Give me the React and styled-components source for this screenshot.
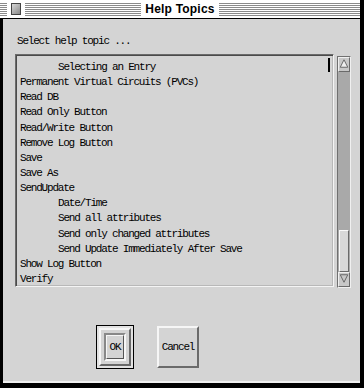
import React from 'react'
import styled, { createGlobalStyle } from 'styled-components'

const Global = createGlobalStyle`
  html, body { margin: 0; padding: 0; background: #000; }
  body { width: 364px; height: 388px; overflow: hidden; }
`

const Win = styled.div`
  width: 364px;
  height: 388px;
  box-sizing: border-box;
  display: flex;
  flex-direction: column;
  border-right: 4px solid #000;
  background: #d4d4d4;
`

const TitleBar = styled.div`
  height: 19px;
  box-sizing: border-box;
  background: #fff;
  border-bottom: 1px solid #000;
  display: grid;
  grid-template-columns: 1fr auto 1fr;
  align-items: center;
  column-gap: 4px;
`

const TitleSide = styled.div`
  display: flex;
  align-items: center;
  gap: 3px;
`

const Stripes = styled.div`
  flex: ${p => p.w ? `0 0 ${p.w}px` : '1 1 0'};
  height: 13px;
  background: repeating-linear-gradient(to bottom, #8a8a8a 0 1px, #fff 1px 2px);
`

const CloseBox = styled.div`
  width: 8px;
  height: 10px;
  flex-shrink: 0;
  margin: 0 1px;
  border: 1px solid #444;
  background: linear-gradient(135deg, #d8d8d8, #888);
`

const Title = styled.div`
  font-family: "Liberation Sans", Arial, sans-serif;
  font-weight: bold;
  font-size: 12px;
  letter-spacing: 0.2px;
  color: #000;
`

const Body = styled.div`
  flex: 1;
  display: flex;
  flex-direction: column;
  border-left: 3px solid #000;
  border-bottom: 5px solid #000;
  box-shadow: inset 0 -2px 0 #f0f0f0;
  padding: 15px 0 0 12px;
  font-family: "Liberation Mono", "DejaVu Sans Mono", monospace;
  font-size: 11px;
  letter-spacing: -1.2px;
  color: #000;
`

const Label = styled.div`
  height: 15px;
  line-height: 15px;
  padding-left: 2px;
  margin-bottom: 5px;
`

const ListRow = styled.div`
  display: flex;
  align-items: flex-start;
  gap: 3px;
`

const ListBox = styled.div`
  position: relative;
  width: 319px;
  height: 233px;
  box-sizing: border-box;
  border: 1px solid;
  border-color: #6a6a6a #f4f4f4 #f4f4f4 #6a6a6a;
  box-shadow: inset 1px 1px 0 #4a4a4a, inset -1px -1px 0 #b8b8b8;
  padding: 5px 0 0 4px;
`

const Item = styled.div`
  height: 15.15px;
  line-height: 15.15px;
  padding-left: ${p => p.indent ? 38 : 0}px;
  white-space: nowrap;
`

const Caret = styled.div`
  position: absolute;
  top: 3px;
  right: 3px;
  width: 2px;
  height: 14px;
  background: #000;
`

const ScrollBar = styled.div`
  margin-top: 2px;
  width: 14px;
  height: 232px;
  box-sizing: border-box;
  border: 1px solid;
  border-color: #707070 #f0f0f0 #f0f0f0 #707070;
  background: #a9a9a9;
  display: flex;
  flex-direction: column;
`

const Arrow = styled.div`
  height: 13px;
  display: flex;
  background: #c8c8c8;
  border: 1px solid;
  border-color: #f0f0f0 #6a6a6a #6a6a6a #f0f0f0;
`

const Track = styled.div`
  flex: 1;
  display: flex;
  flex-direction: column;
  justify-content: flex-end;
`

const Thumb = styled.div`
  height: 42px;
  margin: 0 1px;
  box-sizing: border-box;
  border: 1px solid;
  border-color: #fafafa #6a6a6a #6a6a6a #fafafa;
  background: #d8d8d8;
`

const ButtonRow = styled.div`
  display: flex;
  align-items: center;
  gap: 23px;
  padding: 37px 0 0 81px;
`

const DefaultRing = styled.div`
  width: 38px;
  height: 44px;
  box-sizing: border-box;
  border: 1px solid #000;
  padding: 2px;
  display: flex;
  background: #e2e2e2;
`

const Button = styled.div`
  ${p => p.fill ? 'flex: 1;' : 'width: 42px; height: 42px;'}
  box-sizing: border-box;
  border: 2px solid;
  border-color: #f6f6f6 #6a6a6a #6a6a6a #f6f6f6;
  background: #d4d4d4;
  display: flex;
  align-items: center;
  justify-content: center;
  padding: ${p => p.fill ? '3px' : '0'};
`

const Face = styled.div`
  flex: 1;
  align-self: stretch;
  box-sizing: border-box;
  border: 2px solid;
  border-color: #888 #f6f6f6 #f6f6f6 #888;
  display: flex;
  align-items: center;
  justify-content: center;
`

const Inner = styled.div`
  flex: 1;
  align-self: stretch;
  box-sizing: border-box;
  border: 1px solid;
  border-color: #f6f6f6 #555 #555 #f6f6f6;
  display: flex;
  align-items: center;
  justify-content: center;
`

const items = [
  ['Selecting an Entry', true],
  ['Permanent Virtual Circuits (PVCs)'],
  ['Read DB'],
  ['Read Only Button'],
  ['Read/Write Button'],
  ['Remove Log Button'],
  ['Save'],
  ['Save As'],
  ['SendUpdate'],
  ['Date/Time', true],
  ['Send all attributes', true],
  ['Send only changed attributes', true],
  ['Send Update Immediately After Save', true],
  ['Show Log Button'],
  ['Verify']
]

function UpArrow () {
  return (
    <svg width='12' height='11' viewBox='0 0 12 11'>
      <polygon points='6,1 10.5,10 1.5,10' fill='#eee' stroke='#555' strokeWidth='1' />
    </svg>
  )
}

function DownArrow () {
  return (
    <svg width='12' height='11' viewBox='0 0 12 11'>
      <polygon points='1.5,1 10.5,1 6,10' fill='#c8c8c8' stroke='#555' strokeWidth='1' />
    </svg>
  )
}

export default function App () {
  return (
    <>
      <Global />
      <Win>
        <TitleBar>
          <TitleSide>
            <Stripes w={7} />
            <CloseBox />
            <Stripes />
          </TitleSide>
          <Title>Help Topics</Title>
          <TitleSide>
            <Stripes />
          </TitleSide>
        </TitleBar>
        <Body>
          <Label>Select help topic ...</Label>
          <ListRow>
            <ListBox>
              {items.map(([text, indent]) => (
                <Item key={text} indent={indent}>{text}</Item>
              ))}
              <Caret />
            </ListBox>
            <ScrollBar>
              <Arrow><UpArrow /></Arrow>
              <Track><Thumb /></Track>
              <Arrow><DownArrow /></Arrow>
            </ScrollBar>
          </ListRow>
          <ButtonRow>
            <DefaultRing>
              <Button fill>
                <Face><Inner>OK</Inner></Face>
              </Button>
            </DefaultRing>
            <Button>Cancel</Button>
          </ButtonRow>
        </Body>
      </Win>
    </>
  )
}
